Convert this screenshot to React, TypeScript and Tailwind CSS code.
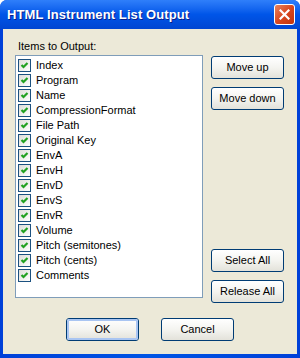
import React from "react";

const items = [
  "Index",
  "Program",
  "Name",
  "CompressionFormat",
  "File Path",
  "Original Key",
  "EnvA",
  "EnvH",
  "EnvD",
  "EnvS",
  "EnvR",
  "Volume",
  "Pitch (semitones)",
  "Pitch (cents)",
  "Comments",
];

// ── XP checkbox ──────────────────────────────────────────────────────────────
function CheckBox() {
  return (
    <div className="w-[13px] h-[13px] border border-[#1C5180] bg-gradient-to-br from-[#DCDCD7] to-[#FFFFFF] flex items-center justify-center flex-shrink-0">
      <svg width="11" height="11" viewBox="0 0 11 11">
        <path d="M2.5 5 L4.5 7 L8.5 3" fill="none" stroke="#21A121" strokeWidth="2.2" />
      </svg>
    </div>
  );
}

// ── XP push button ───────────────────────────────────────────────────────────
function XpButton({ label, focused = false }: { label: string; focused?: boolean }) {
  return (
    <button className="w-[73px] h-[23px] rounded-[3px] border border-[#003C74] bg-gradient-to-b from-[#FFFFFF] via-[#F4F4F0] to-[#E3E2DA] p-0 flex-shrink-0">
      <div
        className={
          focused
            ? "w-full h-full rounded-[2px] border-2 border-[#A9C5F2] flex items-center justify-center text-[11px] text-black"
            : "w-full h-full flex items-center justify-center text-[11px] text-black"
        }
      >
        {label}
      </div>
    </button>
  );
}

export default function App() {
  return (
    <div
      className="w-[300px] h-[358px] bg-white"
      style={{ fontFamily: '"Liberation Sans", Arial, sans-serif' }}
    >
      <div className="w-[300px] h-[358px] rounded-t-[7px] overflow-hidden flex flex-col bg-gradient-to-r from-[#0040D8] via-[#0055E5] to-[#0040D8]">
        {/* Title bar */}
        <div className="h-[29px] flex items-center justify-between pl-[7px] pr-[5px] bg-gradient-to-b from-[#2F7FFA] via-[#0055E8] to-[#0046D2] flex-shrink-0">
          <span className="text-white font-bold text-[13px] tracking-[0.1px] [text-shadow:1px_1px_0_#0A1E8C]">
            HTML Instrument List Output
          </span>
          <div className="w-[21px] h-[21px] rounded-[3px] border border-white bg-gradient-to-br from-[#E8825C] via-[#D9471E] to-[#C0330C] flex items-center justify-center">
            <svg width="11" height="11" viewBox="0 0 11 11">
              <path d="M1.5 1.5 L9.5 9.5 M9.5 1.5 L1.5 9.5" stroke="white" strokeWidth="2.2" strokeLinecap="square" />
            </svg>
          </div>
        </div>

        {/* Dialog body */}
        <div className="flex-1 mx-[3px] mb-[4px] bg-[#ECE9D8] pt-[11px] pl-[12px] flex flex-col">
          <div className="h-[13px] leading-[13px] text-[11px] text-black ml-[3px] mb-[2px]">Items to Output:</div>

          <div className="flex gap-[8px]">
            <div className="w-[188px] h-[243px] border border-[#7F9DB9] bg-white pt-[3px] pl-[2px] flex flex-col">
              {items.map((item) => (
                <div key={item} className="h-[15px] flex items-start gap-[5px]">
                  <CheckBox />
                  <span className="text-[11px] leading-[13px] text-black whitespace-nowrap">{item}</span>
                </div>
              ))}
            </div>

            <div className="mt-[1px] h-[247px] flex flex-col justify-between">
              <div className="flex flex-col gap-[8px]">
                <XpButton label="Move up" />
                <XpButton label="Move down" />
              </div>
              <div className="flex flex-col gap-[8px]">
                <XpButton label="Select All" />
                <XpButton label="Release All" />
              </div>
            </div>
          </div>

          <div className="mt-[15px] flex justify-center gap-[22px] pr-[12px]">
            <XpButton label="OK" focused />
            <XpButton label="Cancel" />
          </div>
        </div>
      </div>
    </div>
  );
}
